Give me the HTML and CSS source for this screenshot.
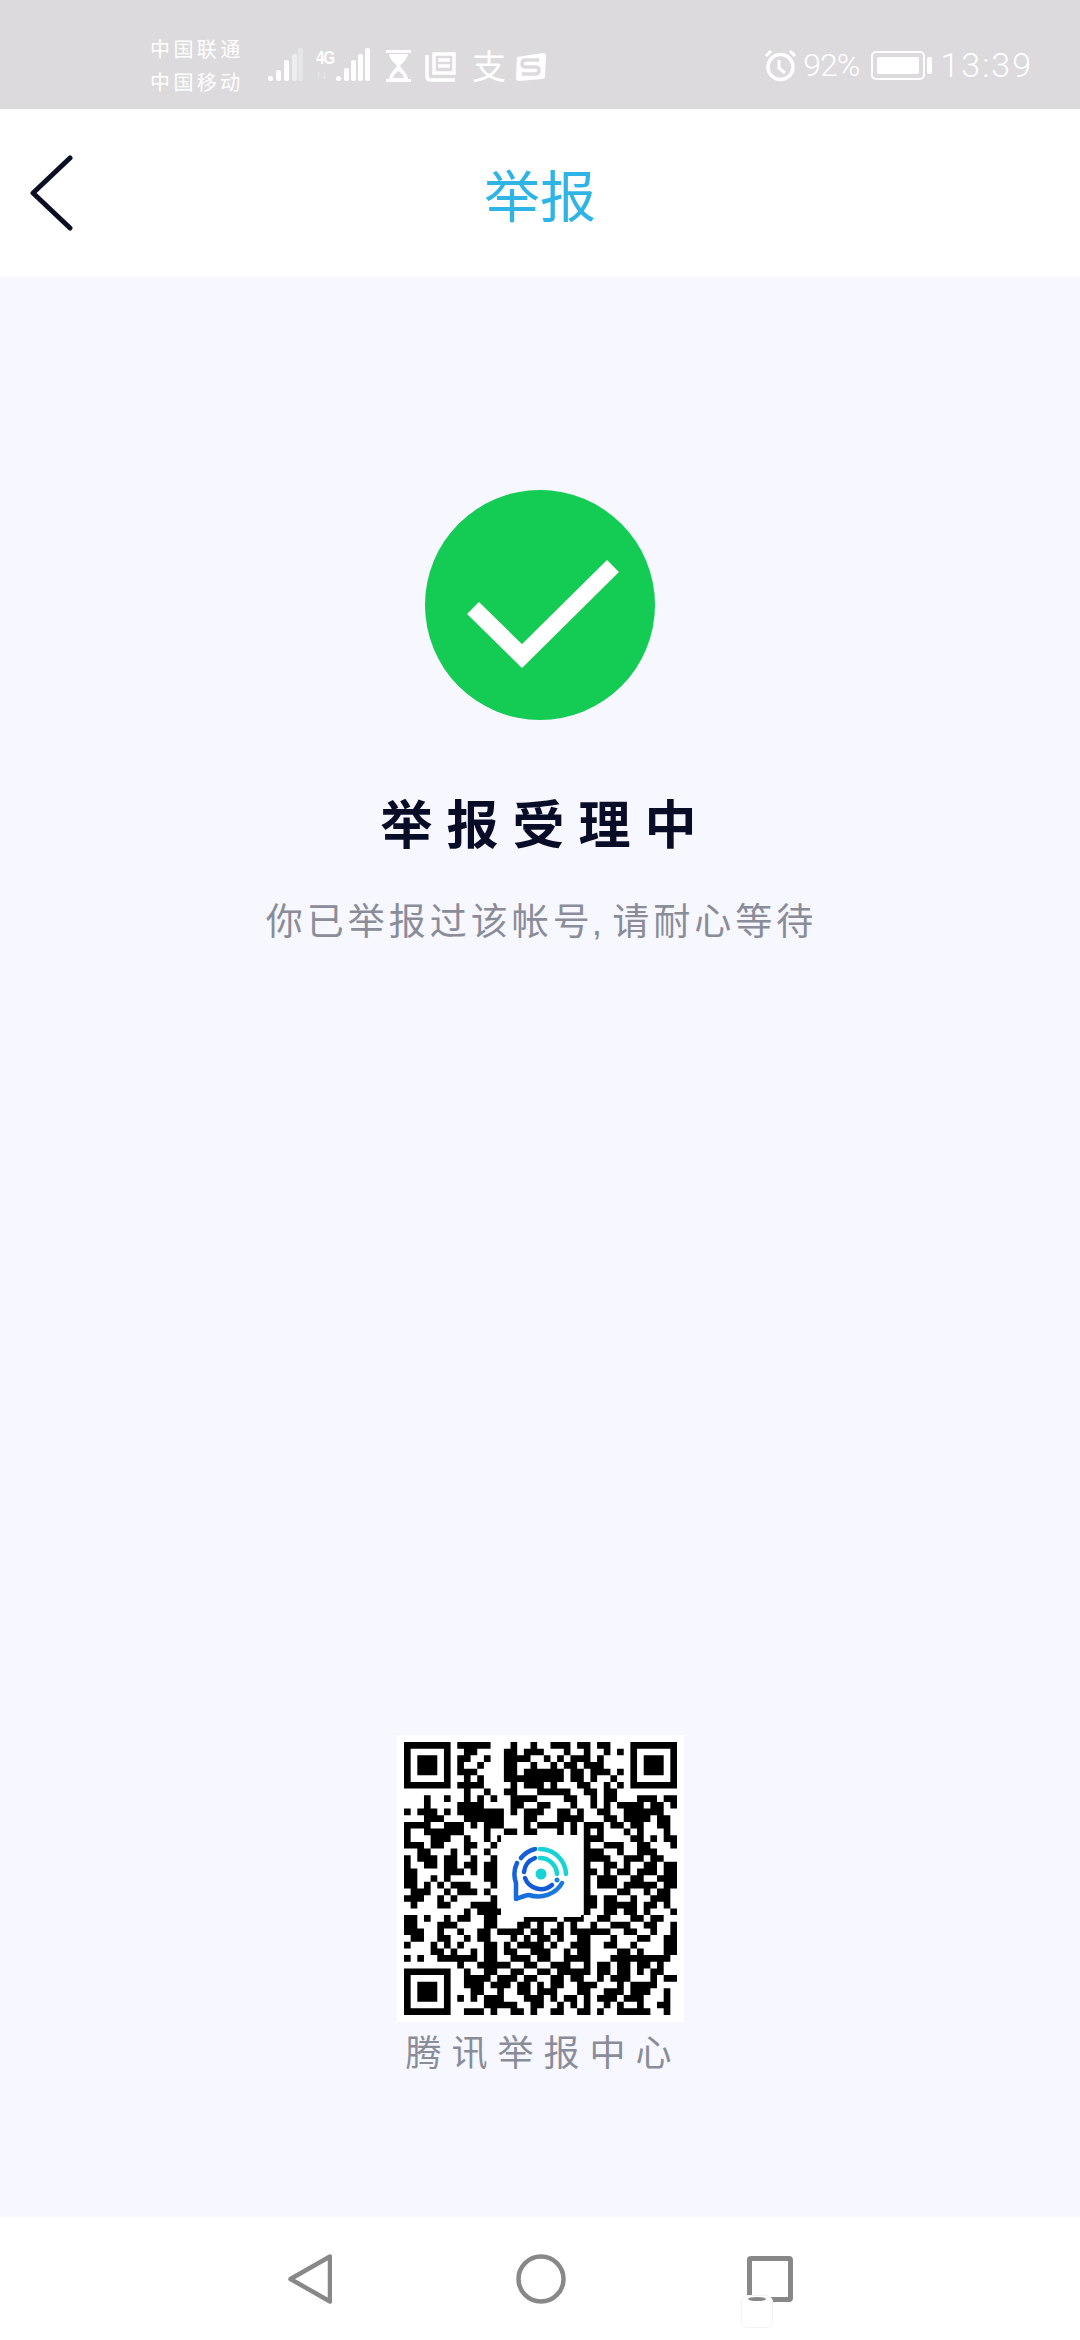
FILE: index.html
```html
<!DOCTYPE HTML>
<html lang="zh-CN">
<head>
<meta charset="utf-8">
<meta name="viewport" content="width=device-width">
<title>举报</title>
<link rel="stylesheet" href="styles.css">
</head>
<body>
  <header class="statusBar">
    <div class="carriers"><span>中国联通</span><span>中国移动</span></div>
    <svg class="signal" viewBox="0 0 35 34" width="35" height="34">
      <circle cx="2.500" cy="30.500" r="2.500" fill="#fff"/>
      <rect x="8" y="22" width="5" height="11" rx="2" fill="#fff"/>
      <rect x="16" y="12" width="5" height="21" rx="2" fill="#fff"/>
      <rect x="24" y="6" width="5" height="27" rx="2" fill="#eeedef"/>
      <rect x="30" y="0" width="5" height="33" rx="2" fill="#e6e5e7"/>
    </svg>
    <div class="network"><b>4G</b><i>↑↓</i></div>
    <svg class="signal signalB" viewBox="0 0 34 34" width="34" height="34">
      <circle cx="2.500" cy="30.500" r="2.500" fill="#fff"/>
      <rect x="8" y="20" width="5" height="13" rx="2" fill="#fff"/>
      <rect x="15" y="12" width="5" height="21" rx="2" fill="#fff"/>
      <rect x="22" y="6" width="5" height="27" rx="2" fill="#fff"/>
      <rect x="29" y="0" width="5" height="33" rx="2" fill="#fff"/>
    </svg>
    <svg class="notif" viewBox="0 0 25 32" width="25" height="32">
      <path d="M0 1.500H25M0 30.500H25" stroke="#fff" stroke-width="3"/>
      <path d="M3 4H22C21 10 16 13 14 16C16 19 21 23 22 29H3C4 23 9 19 11 16C9 13 4 10 3 4Z" fill="#fff"/>
      <path d="M7 28C8 24 11 22 12.500 21C14 22 17 24 18 28Z" fill="#dcdadd"/>
    </svg>
    <svg class="notif notifNews" viewBox="0 0 31 30" width="31" height="30">
      <path d="M2 3V24Q2 28 6 28H30M9 2H29V21H9ZM13 8H25M13 14H25" fill="none" stroke="#fff" stroke-width="3.500"/>
    </svg>
    <span class="alipay">支</span>
    <svg class="notif" viewBox="0 0 33 30" width="33" height="30">
      <path d="M3 5L29 1Q32 1 32 4L31 24Q31 27 28 27L5 29Q2 29 2 26Z" fill="#fff"/>
      <path d="M25 8H12Q8 8 8 12Q8 15 12 15H21Q25 15 25 18Q25 22 21 22H8" fill="none" stroke="#dcdadd" stroke-width="3.500"/>
    </svg>
    <div class="statusRight">
      <svg viewBox="0 0 33 33" width="33" height="33">
        <circle cx="16.500" cy="18" r="12.500" fill="none" stroke="#fff" stroke-width="3.500"/>
        <path d="M15 11V19L21 24M2 7L7 2M31 7L26 2" fill="none" stroke="#fff" stroke-width="3"/>
      </svg>
      <span class="battPct">92%</span>
      <div class="battery"><div class="battFill"></div></div>
      <div class="battTip"></div>
      <span class="clock">13:39</span>
    </div>
  </header>

  <nav class="topBar">
    <svg class="backIcon" viewBox="0 0 46 76" width="46" height="76">
      <path d="M42 3L5 38L42 73" fill="none" stroke="#0c0f24" stroke-width="5" stroke-linecap="round" stroke-linejoin="round"/>
    </svg>
    <h1>举报</h1>
  </nav>

  <main class="content">
    <svg class="okIcon" viewBox="0 0 230 230" width="230" height="230">
      <circle cx="115" cy="115" r="115" fill="#14cb54"/>
      <path d="M48 118L97 166L188 76" fill="none" stroke="#fff" stroke-width="17"/>
    </svg>
    <h2>举报受理中</h2>
    <p class="hint">你已举报过该帐号<span class="comma">,</span>请耐心等待</p>

    <div class="spacer"></div>

    <div class="qrBox">
      <svg class="qrCode" viewBox="0 0 41 41" width="273" height="273">
        <path d="M.5 .5h6v6h-6zM34.500 .5h6v6h-6zM.5 34.500h6v6h-6z" fill="none" stroke="#000"/>
        <path d="M2 2h3v3h-3zM36 2h3v3h-3zM2 36h3v3h-3z" fill="#000"/>
        <path stroke="#000" fill="none" d="
          M8 .5h5M16 .5h1M19 .5h1M22 .5h3M26 .5h2M29 .5h2
          M9 1.500h2M15 1.500h2M18 1.500h3M24 1.500h1M27 1.500h1M30 1.500h1M32 1.500h1
          M8 2.500h2M12 2.500h1M15 2.500h4M21 2.500h1M23 2.500h1M25 2.500h3M29 2.500h1
          M8 3.500h1M11 3.500h1M15 3.500h2M19 3.500h1M22 3.500h1M24 3.500h2M27 3.500h3
          M8 4.500h3M15 4.500h2M18 4.500h3M21 4.500h3M25 4.500h2M28 4.500h3M32 4.500h1
          M9 5.500h1M11 5.500h1M15 5.500h4M19 5.500h5M25 5.500h2M28 5.500h1M31 5.500h1
          M8 6.500h2M10 6.500h2M16 6.500h1M18 6.500h3M22 6.500h1M26 6.500h2M30 6.500h1M32 6.500h1
          M9 7.500h1M12 7.500h1M15 7.500h2M20 7.500h2M22 7.500h3M27 7.500h2M30 7.500h2
          M3 8.500h1M6 8.500h1M9 8.500h1M11 8.500h1M13 8.500h1M16 8.500h4M24 8.500h2M28 8.500h1M30 8.500h2M35 8.500h3M39 8.500h2
          M3 9.500h1M8 9.500h4M16 9.500h2M20 9.500h2M25 9.500h1M28 9.500h1M30 9.500h1M32 9.500h4M37 9.500h2M40 9.500h1
          M0 10.500h1M2 10.500h3M6 10.500h1M8 10.500h7M16 10.500h1M18 10.500h3M23 10.500h2M26 10.500h1M29 10.500h2M33 10.500h6
          M3 11.500h3M9 11.500h6M18 11.500h2M23 11.500h4M30 11.500h2M33 11.500h4M38 11.500h2
          M0 12.500h4M6 12.500h3M10 12.500h1M12 12.500h3M18 12.500h1M20 12.500h3M23 12.500h1M25 12.500h1M27 12.500h3M31 12.500h2M34 12.500h2M38 12.500h2
          M0 13.500h1M3 13.500h3M6 13.500h3M12 13.500h1M15 13.500h2M18 13.500h2M23 13.500h1M25 13.500h1M27 13.500h1M29 13.500h1M33 13.500h1M35 13.500h1M39 13.500h1
          M0 14.500h1M4 14.500h3M9 14.500h1M12 14.500h1M14 14.500h1M16 14.500h1M19 14.500h1M21 14.500h1M24 14.500h1M27 14.500h3M34 14.500h2M37 14.500h1M39 14.500h2
          M0 15.500h3M4 15.500h2M9 15.500h2M13 15.500h1M27 15.500h1M30 15.500h3M35 15.500h2M40 15.500h1
          M2 16.500h2M7 16.500h1M9 16.500h1M12 16.500h1M27 16.500h3M32 16.500h1M35 16.500h3
          M0 17.500h1M2 17.500h3M6 17.500h2M10 17.500h1M13 17.500h1M27 17.500h4M33 17.500h3M37 17.500h2
          M0 18.500h1M3 18.500h2M6 18.500h2M9 18.500h2M12 18.500h2M27 18.500h1M30 18.500h2M33 18.500h1M36 18.500h2M39 18.500h2
          M0 19.500h2M6 19.500h3M10 19.500h1M12 19.500h2M27 19.500h2M30 19.500h1M32 19.500h2M35 19.500h3M39 19.500h2
          M0 20.500h2M4 20.500h1M6 20.500h1M12 20.500h2M27 20.500h1M29 20.500h3M34 20.500h2M38 20.500h3
          M0 21.500h2M3 21.500h1M5 21.500h1M7 21.500h3M13 21.500h1M27 21.500h1M29 21.500h3M33 21.500h5M39 21.500h2
          M1 22.500h3M6 22.500h1M8 22.500h3M12 22.500h1M27 22.500h1M32 22.500h2M36 22.500h1M38 22.500h2
          M0 23.500h3M5 23.500h1M7 23.500h1M13 23.500h1M27 23.500h2M30 23.500h2M34 23.500h1M37 23.500h3
          M1 24.500h1M5 24.500h2M10 24.500h4M27 24.500h2M30 24.500h5M36 24.500h2M39 24.500h1
          M9 25.500h1M11 25.500h4M27 25.500h1M30 25.500h2M33 25.500h2M36 25.500h1M40 25.500h1
          M0 26.500h2M3 26.500h1M6 26.500h1M8 26.500h2M12 26.500h2M18 26.500h5M24 26.500h3M29 26.500h2M34 26.500h2M37 26.500h2
          M0 27.500h2M5 27.500h3M12 27.500h2M17 27.500h2M20 27.500h1M23 27.500h1M25 27.500h1M28 27.500h1M31 27.500h3M36 27.500h2M40 27.500h1
          M0 28.500h3M5 28.500h1M8 28.500h1M11 28.500h2M14 28.500h1M15 28.500h3M19 28.500h2M22 28.500h2M25 28.500h4M29 28.500h2M33 28.500h2M37 28.500h1M40 28.500h1
          M1 29.500h2M5 29.500h2M9 29.500h1M11 29.500h2M16 29.500h1M18 29.500h1M20 29.500h2M23 29.500h1M26 29.500h2M31 29.500h1M35 29.500h2M39 29.500h2
          M0 30.500h1M4 30.500h1M6 30.500h1M8 30.500h1M12 30.500h2M15 30.500h1M17 30.500h4M22 30.500h1M25 30.500h3M30 30.500h2M34 30.500h1M39 30.500h2
          M4 31.500h2M7 31.500h1M10 31.500h1M12 31.500h2M15 31.500h2M19 31.500h3M24 31.500h1M26 31.500h2M32 31.500h2M35 31.500h1M39 31.500h2
          M0 32.500h1M2 32.500h1M5 32.500h6M12 32.500h2M16 32.500h3M20 32.500h2M24 32.500h4M31 32.500h9
          M8 33.500h1M11 33.500h4M15 33.500h1M18 33.500h2M22 33.500h3M27 33.500h1M29 33.500h2M32 33.500h2M35 33.500h2M38 33.500h1
          M9 34.500h1M12 34.500h2M16 34.500h2M20 34.500h2M23 34.500h5M29 34.500h2M32 34.500h2M35 34.500h1M37 34.500h2
          M9 35.500h4M14 35.500h3M18 35.500h2M22 35.500h2M25 35.500h2M29 35.500h1M31 35.500h3M37 35.500h1M39 35.500h2
          M9 36.500h3M13 36.500h3M17 36.500h2M20 36.500h1M22 36.500h2M26 36.500h3M32 36.500h1M34 36.500h3M37 36.500h1
          M10 37.500h2M14 37.500h1M17 37.500h2M20 37.500h3M26 37.500h2M30 37.500h3M34 37.500h3M39 37.500h1
          M8 38.500h1M10 38.500h1M12 38.500h3M18 38.500h3M22 38.500h1M24 38.500h2M27 38.500h1M29 38.500h3M33 38.500h3M39 38.500h1
          M12 39.500h3M15 39.500h2M19 39.500h2M23 39.500h1M25 39.500h1M27 39.500h1M30 39.500h1M32 39.500h1M35 39.500h1M38 39.500h2
          M9 40.500h3M13 40.500h1M16 40.500h2M19 40.500h1M22 40.500h2M26 40.500h2M29 40.500h1M32 40.500h5M39 40.500h1
        "/>
      </svg>
      <div class="qrLogo">
        <svg viewBox="0 0 58 58" width="58" height="58">
          <defs>
            <linearGradient id="logoBlue" x1="0" y1="0" x2="1" y2="1">
              <stop offset="0" stop-color="#1459d6"/>
              <stop offset="1" stop-color="#1a7fe0"/>
            </linearGradient>
          </defs>
          <path d="M23 2A26 26 0 0 0 9 11M5 16A26 26 0 0 0 4 36C4 42 4 50 4 52C10 50 14 48 17 48C30 52 44 47 50 36" fill="none" stroke="url(#logoBlue)" stroke-width="4.500" stroke-linecap="round" stroke-linejoin="round"/>
          <path d="M28 2A26 26 0 0 1 54 27M28 11A17 17 0 0 1 45 27" fill="none" stroke="#17d3d6" stroke-width="4.500" stroke-linecap="round"/>
          <path d="M23 11A17 17 0 0 0 12 25M13 31A17 17 0 0 0 40 38" fill="none" stroke="#1459d6" stroke-width="4.500" stroke-linecap="round"/>
          <circle cx="29" cy="27" r="5.500" fill="#17d3d6"/>
          <circle cx="45" cy="33" r="2.500" fill="#1a7fe0"/>
        </svg>
      </div>
    </div>
    <div class="qrLabel">腾讯举报中心</div>
  </main>

  <footer class="navBar">
    <svg viewBox="0 0 44 50" width="44" height="50">
      <path d="M42 2.500V47.500L2.500 25Z" fill="none" stroke="#888" stroke-width="4.500" stroke-linejoin="round"/>
    </svg>
    <svg viewBox="0 0 50 50" width="50" height="50">
      <circle cx="25" cy="25" r="22.500" fill="none" stroke="#888" stroke-width="4.500"/>
    </svg>
    <div class="recentBtn"><div class="watermark"></div></div>
  </footer>
</body>
</html>
```
FILE: styles.css
```css
* {
	box-sizing: border-box;
}
body {
	display: flex;
	flex-direction: column;
	height: 2340px;
	margin: 0;
	background: #f7f8ff;
	font-family: "Noto Sans CJK SC", "Noto Sans", sans-serif;
}

.statusBar {
	display: flex;
	align-items: flex-end;
	height: 109px;
	padding: 0 0 27px 150px;
	background: #dcdadd;
	color: #fff;
}
.carriers {
	display: flex;
	flex-direction: column;
	width: 118px;
	font-size: 20px;
	line-height: 33px;
	letter-spacing: 3.400px;
	margin-bottom: -16px;
}
.signal { margin-right: 13px; }
.signalB { margin-left: 3px; margin-right: 16px; }
.network {
	display: flex;
	flex-direction: column;
	width: 17px;
	height: 34px;
	font: 19px/19px "Liberation Sans", sans-serif;
}
.network b { letter-spacing: -1.500px; transform: scaleX(.8); transform-origin: left; }
.network i { font-size: 11px; font-style: normal; color: #eeedef; line-height: 15px; }
.notif { margin-right: 18px; }
.notifNews { margin-right: 16px; margin-left: -4px; }
.alipay {
	width: 42px;
	font-size: 34px;
	line-height: 34px;
}
.statusRight {
	display: flex;
	align-items: center;
	margin-left: auto;
	margin-bottom: -3px;
	padding-right: 47px;
	font-family: Roboto, sans-serif;
	font-weight: 300;
}
.battPct { margin: 0 12px 0 6px; font-size: 32px; letter-spacing: -1px; }
.battery {
	width: 54px;
	height: 29px;
	padding: 4px;
	border: 2px solid #fff;
	border-radius: 5px;
}
.battFill { width: 42px; height: 100%; background: #fff; border-radius: 2px; }
.battTip { width: 5px; height: 17px; margin: 0 8px 0 2px; background: #fff; border-radius: 2px; }
.clock { font-size: 34px; letter-spacing: 2px; }

.topBar {
	display: flex;
	align-items: center;
	justify-content: center;
	position: relative;
	height: 168px;
	background: #fff;
}
.backIcon { position: absolute; left: 28px; top: 46px; }
h1 {
	margin: 0;
	color: #2fb4e6;
	font-size: 56px;
	font-weight: 400;
	line-height: 70px;
}

.content {
	display: flex;
	flex: 1;
	flex-direction: column;
	align-items: center;
	padding-top: 213px;
}
h2 {
	margin: 67px 0 0 11px;
	color: #090c26;
	font-size: 52px;
	font-weight: 700;
	line-height: 70px;
	letter-spacing: 14px;
}
.hint {
	margin: 37px 0 0 3px;
	color: #8a8d99;
	font-size: 37px;
	line-height: 50px;
	letter-spacing: 4px;
}
.comma { margin: 0 6px 0 -2px; font-family: "Liberation Sans", sans-serif; }
.spacer { flex: 1; }
.qrBox {
	position: relative;
	padding: 7px;
	background: #fff;
}
.qrCode { display: block; }
.qrLogo {
	position: absolute;
	left: 104px;
	top: 100px;
	display: flex;
	align-items: center;
	justify-content: center;
	width: 80px;
	height: 82px;
	background: #fff;
}
.qrLabel {
	margin: 3px 0 142px 7px;
	color: #8a8d99;
	font-size: 36px;
	line-height: 50px;
	letter-spacing: 10px;
}

.navBar {
	display: flex;
	align-items: center;
	justify-content: center;
	gap: 184px;
	height: 123px;
	background: #fff;
}
.recentBtn {
	position: relative;
	width: 46px;
	height: 46px;
	margin-left: -3px;
	border: 5px solid #888;
	border-radius: 4px;
}
.watermark {
	position: absolute;
	left: -11px;
	top: 34px;
	width: 32px;
	height: 33px;
	background: #fff;
	border: 1px solid #f4f4f4;
	border-radius: 7px;
}
.watermark::before {
	content: "";
	position: absolute;
	left: 6px;
	top: 1px;
	width: 18px;
	height: 4px;
	background: #888;
	border-radius: 50%;
}
```
